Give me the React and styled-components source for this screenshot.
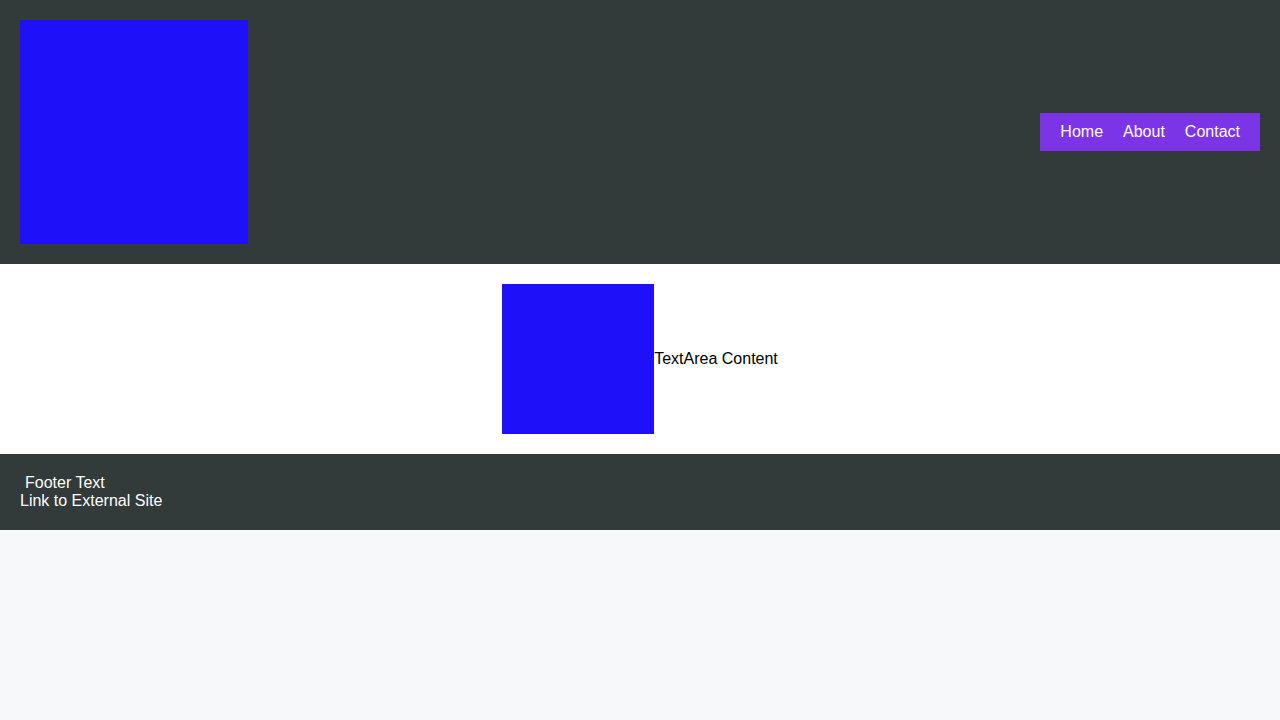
import React from "react";
import styled, { createGlobalStyle } from "styled-components";

const GlobalStyle = createGlobalStyle`
  html, body {
    margin: 0;
    padding: 0;
    background-color: #f7f8fa;
    font-family: "Liberation Sans", Arial, sans-serif;
    font-size: 16px;
    line-height: 18px;
  }
`;

const Header = styled.header`
  display: flex;
  justify-content: space-between;
  align-items: center;
  padding: 20px;
  background-color: #323a3a;
`;

const Logo = styled.div`
  width: 228px;
  height: 224px;
  background-color: #1e10f9;
`;

const Nav = styled.nav`
  display: flex;
  gap: 20px;
  padding: 10px 20px;
  background-color: #7c35e6;

  a {
    color: #ffffff;
    text-decoration: none;
  }
`;

const Main = styled.main`
  display: flex;
  justify-content: center;
  align-items: center;
  padding: 20px;
  background-color: #ffffff;
`;

const Picture = styled.div`
  width: 152px;
  height: 150px;
  background-color: #1e10f9;
`;

const TextArea = styled.div`
  color: #000000;
`;

const Footer = styled.footer`
  padding: 20px;
  background-color: #323a3a;
  color: #ffffff;

  a {
    display: block;
    color: #ffffff;
    text-decoration: none;
  }
`;

const FooterText = styled.p`
  margin: 0;
  padding-left: 5px;
`;

const App = () => {
  return (
    <>
      <GlobalStyle />
      <Header>
        <Logo />
        <Nav>
          <a href="#home">Home</a>
          <a href="#about">About</a>
          <a href="#contact">Contact</a>
        </Nav>
      </Header>
      <Main>
        <Picture />
        <TextArea>TextArea Content</TextArea>
      </Main>
      <Footer>
        <FooterText>Footer Text</FooterText>
        <a href="#external">Link to External Site</a>
      </Footer>
    </>
  );
};

export default App;
